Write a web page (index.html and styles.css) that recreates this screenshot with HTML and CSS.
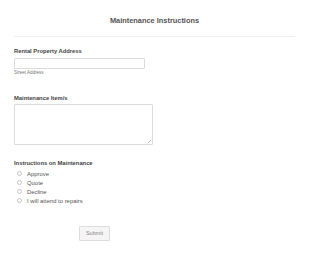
FILE: index.html
```html
<!DOCTYPE html>
<html lang="en">
<head>
    <meta charset="UTF-8">
    <title>Maintenance Instructions</title>
    <link rel="stylesheet" href="styles.css">
</head>
<body>
    <form id="maintenance-form">
        <h1 class="form-title">Maintenance Instructions</h1>
        <div class="divider"></div>

        <div class="field field-address">
            <label class="field-label" for="street">Rental Property Address</label>
            <input class="text-input" type="text" id="street">
            <span class="sub-label">Street Address</span>
        </div>

        <div class="field field-items">
            <label class="field-label" for="items">Maintenance Item/s</label>
            <div class="area-wrap">
                <textarea class="text-area" id="items"></textarea>
            </div>
        </div>

        <div class="field field-instructions">
            <span class="field-label">Instructions on Maintenance</span>
            <label class="radio-row"><input type="radio" name="instr"> Approve</label>
            <label class="radio-row"><input type="radio" name="instr"> Quote</label>
            <label class="radio-row"><input type="radio" name="instr"> Decline</label>
            <label class="radio-row"><input type="radio" name="instr"> I will attend to repairs</label>
        </div>

        <div class="submit-row">
            <button type="button" id="submit-button">Submit</button>
        </div>
    </form>
</body>
</html>
```

FILE: styles.css
```css
body {
    margin: 0;
    padding: 0;
    background-color: #fff;
    font-family: "Liberation Sans", Arial, sans-serif;
    color: #555;
}

#maintenance-form {
    padding: 0 15px 0 14px;
}

.form-title {
    margin: 0;
    padding-top: 16px;
    font-size: 7.4px;
    line-height: 9px;
    font-weight: bold;
    text-align: center;
    color: #555;
}

.divider {
    margin-top: 11px;
    height: 1px;
    background-color: #eeeeee;
}

.field {
    display: flex;
    flex-direction: column;
    align-items: flex-start;
}

.field-label {
    display: block;
    font-size: 5.8px;
    line-height: 7px;
    font-weight: bold;
    color: #444;
}

.field-address {
    margin-top: 11px;
}

.text-input {
    margin: 3px 0 0 0;
    padding: 0;
    width: 131px;
    height: 11px;
    box-sizing: border-box;
    border: 1px solid #dcdcdc;
    border-radius: 1px;
    outline: none;
}

.sub-label {
    margin-top: 1px;
    font-size: 4.5px;
    line-height: 5px;
    color: #777;
}

.field-items {
    margin-top: 20px;
}

.area-wrap {
    position: relative;
    margin-top: 2px;
}

/* little grip drawn by hand, the native one is too big at this scale */
.area-wrap::after {
    content: "";
    position: absolute;
    right: 2px;
    bottom: 2px;
    width: 3px;
    height: 3px;
    background: linear-gradient(135deg, transparent 45%, #bbb 45%, #bbb 60%, transparent 60%);
}

.text-area {
    display: block;
    margin: 0;
    padding: 0;
    width: 139px;
    height: 41px;
    box-sizing: border-box;
    border: 1px solid #dcdcdc;
    border-radius: 1px;
    resize: none;
    outline: none;
}

.field-instructions {
    margin-top: 15px;
}

.field-instructions .field-label {
    margin-bottom: 2px;
}

.radio-row {
    display: flex;
    align-items: center;
    height: 9px;
    font-size: 5.9px;
    color: #555;
    padding-left: 3px;
}

.radio-row input {
    appearance: none;
    -webkit-appearance: none;
    margin: 0 5px 0 0;
    width: 5px;
    height: 5px;
    border: 1px solid #c4c4c4;
    border-radius: 50%;
    background: #fff;
}

.submit-row {
    margin-top: 16px;
    padding-left: 65px;
}

#submit-button {
    width: 31px;
    height: 15px;
    padding: 0;
    font-family: "Liberation Sans", Arial, sans-serif;
    font-size: 5.5px;
    color: #888;
    background-color: #f5f5f5;
    border: 1px solid #dddddd;
    border-radius: 1px;
}
```
